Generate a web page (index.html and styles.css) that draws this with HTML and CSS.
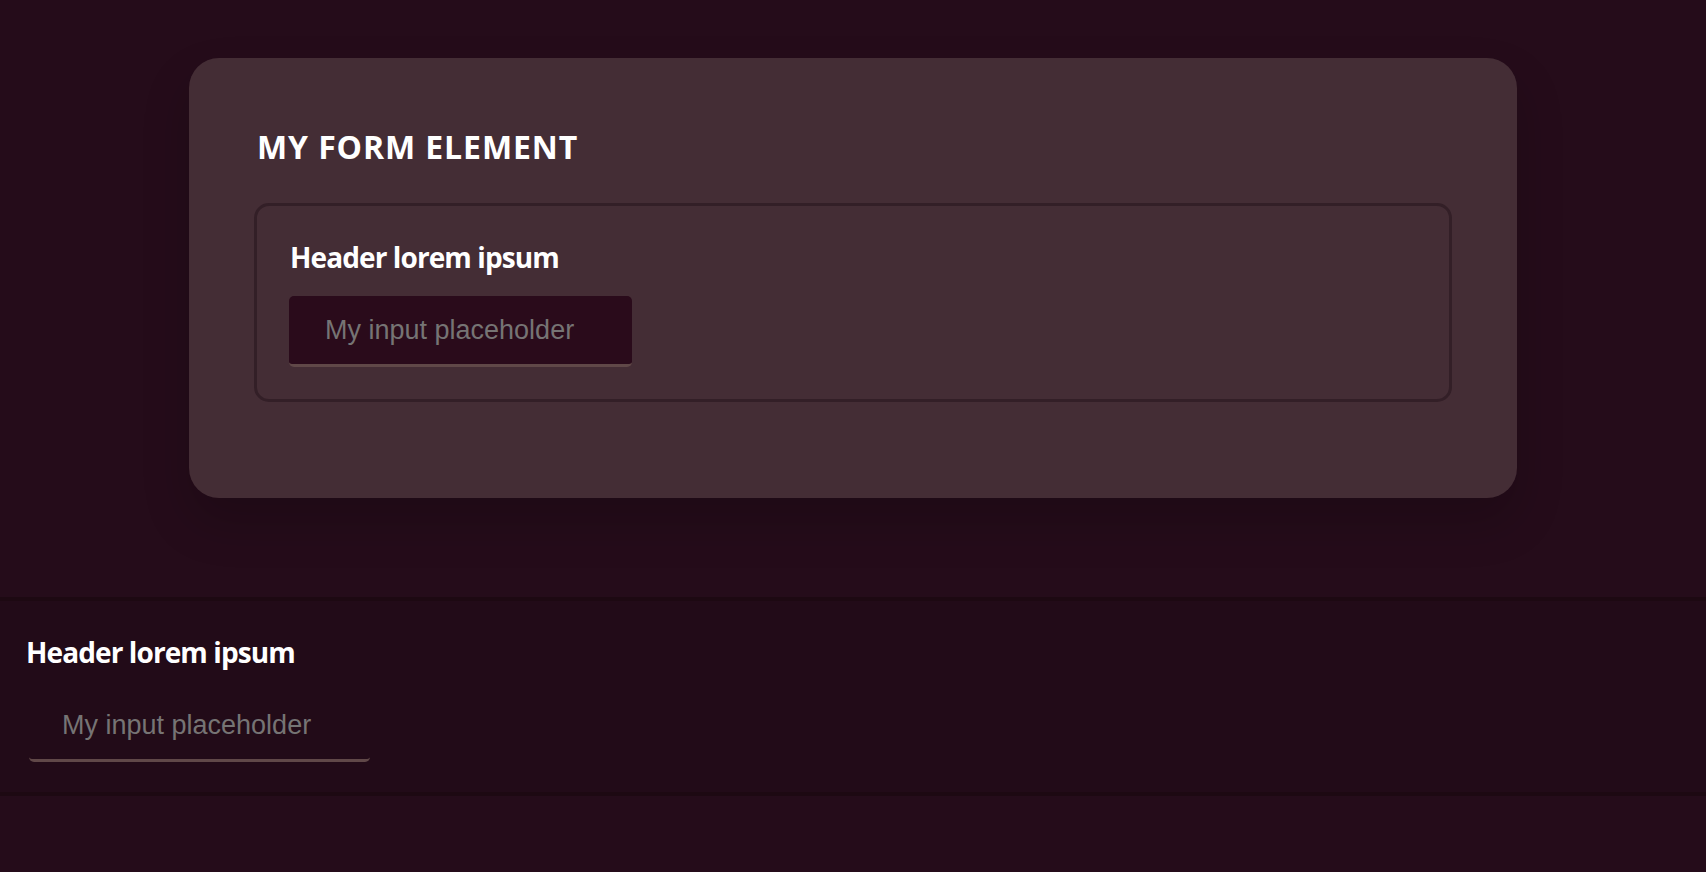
FILE: index.html
```html
<!DOCTYPE html>
<html lang="en">
<head>
<meta charset="utf-8">
<title>My form element</title>
<link rel="stylesheet" href="styles.css">
</head>
<body>
  <main class="page">
    <section class="card">
      <h1 class="card-title">MY FORM ELEMENT</h1>
      <div class="field-box">
        <h2 class="field-header">Header lorem ipsum</h2>
        <input class="field-input" type="text" placeholder="My input placeholder">
      </div>
    </section>
    <section class="band">
      <h2 class="field-header">Header lorem ipsum</h2>
      <input class="field-input field-input--flat" type="text" placeholder="My input placeholder">
    </section>
  </main>
</body>
</html>
```
FILE: styles.css
```css
* { box-sizing: border-box; }

html, body {
  margin: 0;
  padding: 0;
  background: #250c1a;
  height: 100%;
}

body {
  font-family: "Open Sans", "Noto Sans", sans-serif;
  color: #ffffff;
}

.page {
  display: flex;
  flex-direction: column;
  padding-top: 58px;
}

.card {
  width: 1328px;
  margin: 0 auto 99px;
  background: #442d35;
  border-radius: 30px;
  padding: 69px 65px 96px;
  box-shadow: 0 24px 48px rgba(0, 0, 0, 0.18);
}

.card-title {
  margin: 0 0 36px 3px;
  font-size: 32px;
  line-height: 40px;
  font-weight: 700;
  letter-spacing: 0.9px;
}

.field-box {
  border: 3px solid #331f27;
  border-radius: 15px;
  padding: 32px;
  display: flex;
  flex-direction: column;
  align-items: flex-start;
}

.field-header {
  margin: 1px 0 21px 1px;
  font-size: 28px;
  line-height: 36px;
  font-weight: 700;
  letter-spacing: -0.9px;
}

.field-input {
  width: 343px;
  height: 71px;
  padding: 0 34px 0 36px;
  border: none;
  border-bottom: 3px solid #604848;
  border-radius: 5px;
  background: #2a0b1b;
  font-family: "Liberation Sans", Arial, sans-serif;
  font-size: 27px;
  color: #ffffff;
  outline: none;
}

.field-input::placeholder {
  color: #767474;
  opacity: 1;
}

.field-input--flat {
  background: transparent;
  width: 341px;
  padding-left: 33px;
}

.band {
  background: #220b18;
  border-top: 4px solid #1d0912;
  border-bottom: 4px solid #1d0912;
  padding: 32px 24px 30px 29px;
  display: flex;
  flex-direction: column;
  align-items: flex-start;
}

.band .field-header {
  margin-left: -3px;
}
```
